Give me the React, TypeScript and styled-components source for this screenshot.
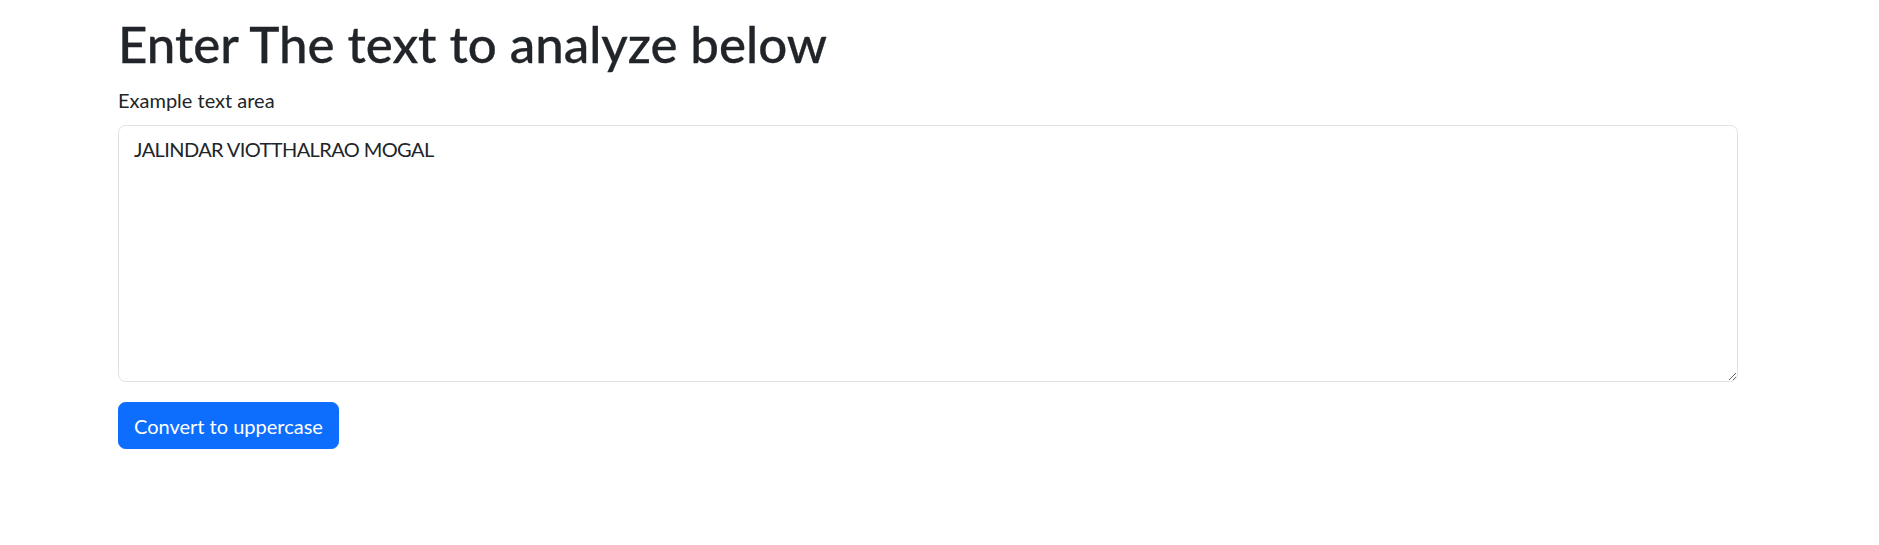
import React, { useState } from "react";
import styled, { createGlobalStyle } from "styled-components";

const GlobalStyle = createGlobalStyle`
  *, *::before, *::after { box-sizing: border-box; }
  body {
    margin: 0;
    background: #ffffff;
    color: #212529;
    font-family: "Lato", "Roboto", "Liberation Sans", sans-serif;
    font-size: 20px;
    line-height: 1.5;
  }
`;

const Container = styled.main`
  width: 1620px;
  margin-left: 118px;
  padding-top: 14px;
  display: flex;
  flex-direction: column;
  align-items: flex-start;
`;

const Heading = styled.h1`
  margin: 0 0 11px;
  font-size: 51px;
  line-height: 60px;
  font-weight: 500;
  color: #212529;
  -webkit-text-stroke: 0.3px #212529;
`;

const Field = styled.div`
  display: flex;
  flex-direction: column;
  align-self: stretch;
  margin-bottom: 20px;
`;

const Label = styled.label`
  display: block;
  margin-bottom: 10px;
  font-size: 20px;
  line-height: 30px;
  color: #212529;
`;

const TextArea = styled.textarea`
  display: block;
  width: 100%;
  height: 257px;
  padding: 7.5px 15px;
  font-family: inherit;
  font-size: 20px;
  line-height: 30px;
  letter-spacing: -0.6px;
  color: #212529;
  background: #ffffff;
  border: 1px solid #dee2e6;
  border-radius: 7.5px;
  resize: vertical;
  outline: none;
`;

const Button = styled.button`
  display: inline-block;
  padding: 7.5px 15px;
  font-family: inherit;
  font-size: 20px;
  line-height: 30px;
  color: #ffffff;
  background: #0d6efd;
  border: 1px solid #0d6efd;
  border-radius: 7.5px;
  cursor: pointer;
`;

export default function App() {
  const [text, setText] = useState("JALINDAR VIOTTHALRAO MOGAL");
  return (
    <>
      <GlobalStyle />
      <Container>
        <Heading>Enter The text to analyze below</Heading>
        <Field>
          <Label htmlFor="myBox">Example text area</Label>
          <TextArea id="myBox" value={text} onChange={(e) => setText(e.target.value)} />
        </Field>
        <Button type="button" onClick={() => setText(text.toUpperCase())}>
          Convert to uppercase
        </Button>
      </Container>
    </>
  );
}
